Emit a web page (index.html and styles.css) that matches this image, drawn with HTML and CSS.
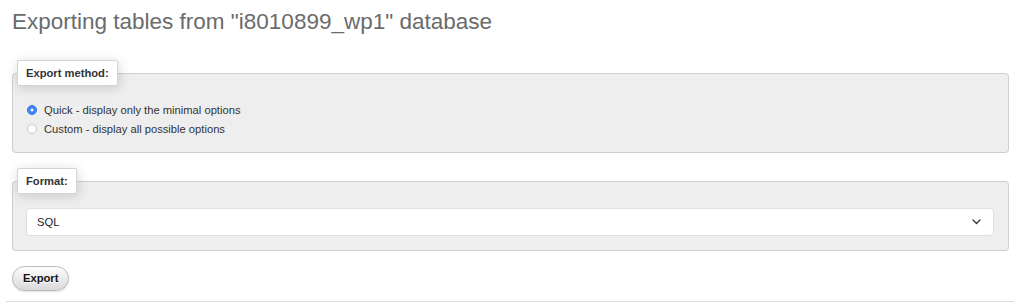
FILE: index.html
```html
<!DOCTYPE html>
<html lang="en">
<head>
  <meta charset="UTF-8">
  <meta name="viewport" content="width=device-width, initial-scale=1.0">
  <title>Export</title>
  <link rel="stylesheet" href="styles.css">
</head>
<body>
  <h2 class="page-title">Exporting tables from "i8010899_wp1" database</h2>

  <form class="export-form">
    <fieldset class="group">
      <legend>Export method:</legend>
      <div class="options">
        <label class="option">
          <input type="radio" name="quick_or_custom" value="quick" checked>
          Quick - display only the minimal options
        </label>
        <label class="option">
          <input type="radio" name="quick_or_custom" value="custom">
          Custom - display all possible options
        </label>
      </div>
    </fieldset>

    <fieldset class="group">
      <legend>Format:</legend>
      <div class="format-row">
        <div class="select-wrap">
          <select class="format-select" name="what">
            <option value="sql">SQL</option>
          </select>
          <svg class="chevron" width="9" height="6" viewBox="0 0 9 6">
            <path d="M1 1l3.5 3.5L8 1" fill="none" stroke="#333" stroke-width="1.3" stroke-linecap="round" stroke-linejoin="round"/>
          </svg>
        </div>
      </div>
    </fieldset>

    <div class="actions">
      <button type="button" class="button">Export</button>
    </div>
  </form>

  <div class="footer-rule"></div>
</body>
</html>
```

FILE: styles.css
```css
body {
  margin: 0;
  padding: 0 15px 0 12px;
  font-family: "Liberation Sans", Arial, sans-serif;
  font-size: 11.2px;
  color: #333;
  background: #fff;
  overflow: hidden;
}

.page-title {
  margin: 9px 0 25px 0;
  font-size: 22.5px;
  font-weight: normal;
  color: #6b6b6b;
}

.group {
  margin: 0 0 15px 0;
  padding: 0 4px;
  background: #eee;
  border: 1px solid #cfcfcf;
  border-radius: 4px;
}

.group legend {
  padding: 5px 8px;
  line-height: 14px;
  font-weight: bold;
  color: #333;
  background: #fff;
  border: 1px solid #d4d4d4;
  border-radius: 2px;
  box-shadow: 1px 2px 12px rgba(0, 0, 0, 0.16);
}

.options {
  padding: 14px 9px 14px;
}

.option {
  display: flex;
  align-items: center;
  height: 19px;
}

.option input {
  appearance: none;
  -webkit-appearance: none;
  width: 10px;
  height: 10px;
  margin: 0 7px 0 1px;
  border: 1px solid #c8c8c8;
  border-radius: 50%;
  background: #fff;
  flex-shrink: 0;
}

.option input:checked {
  border-color: #2c72e8;
  background: #3a82f7;
  box-shadow: inset 0 0 0 2.5px #3a82f7, inset 0 0 0 5px #fff;
}

.format-row {
  padding: 14px 10px 14px 9px;
}

.select-wrap {
  position: relative;
}

.format-select {
  appearance: none;
  -webkit-appearance: none;
  display: block;
  width: 100%;
  height: 28px;
  padding: 0 10px;
  font-family: inherit;
  font-size: 11.2px;
  color: #222;
  background: #fff;
  border: 1px solid #e0e0e0;
  border-radius: 4px;
}

.chevron {
  position: absolute;
  right: 13px;
  top: 11px;
  pointer-events: none;
}

.actions {
  margin-top: 15px;
}

.button {
  padding: 5px 10px;
  line-height: 13px;
  font-family: inherit;
  font-size: 11.2px;
  font-weight: bold;
  color: #111;
  text-shadow: 0 1px 0 #fff;
  background: linear-gradient(#fdfdfd, #d9d9d9);
  border: 1px solid #bbb;
  border-radius: 20px;
  box-shadow: 0 1px 2px rgba(0, 0, 0, 0.12);
  cursor: pointer;
}

.footer-rule {
  margin: 10px -5px 0 -6px;
  border-top: 1px solid #ddd;
}
```
